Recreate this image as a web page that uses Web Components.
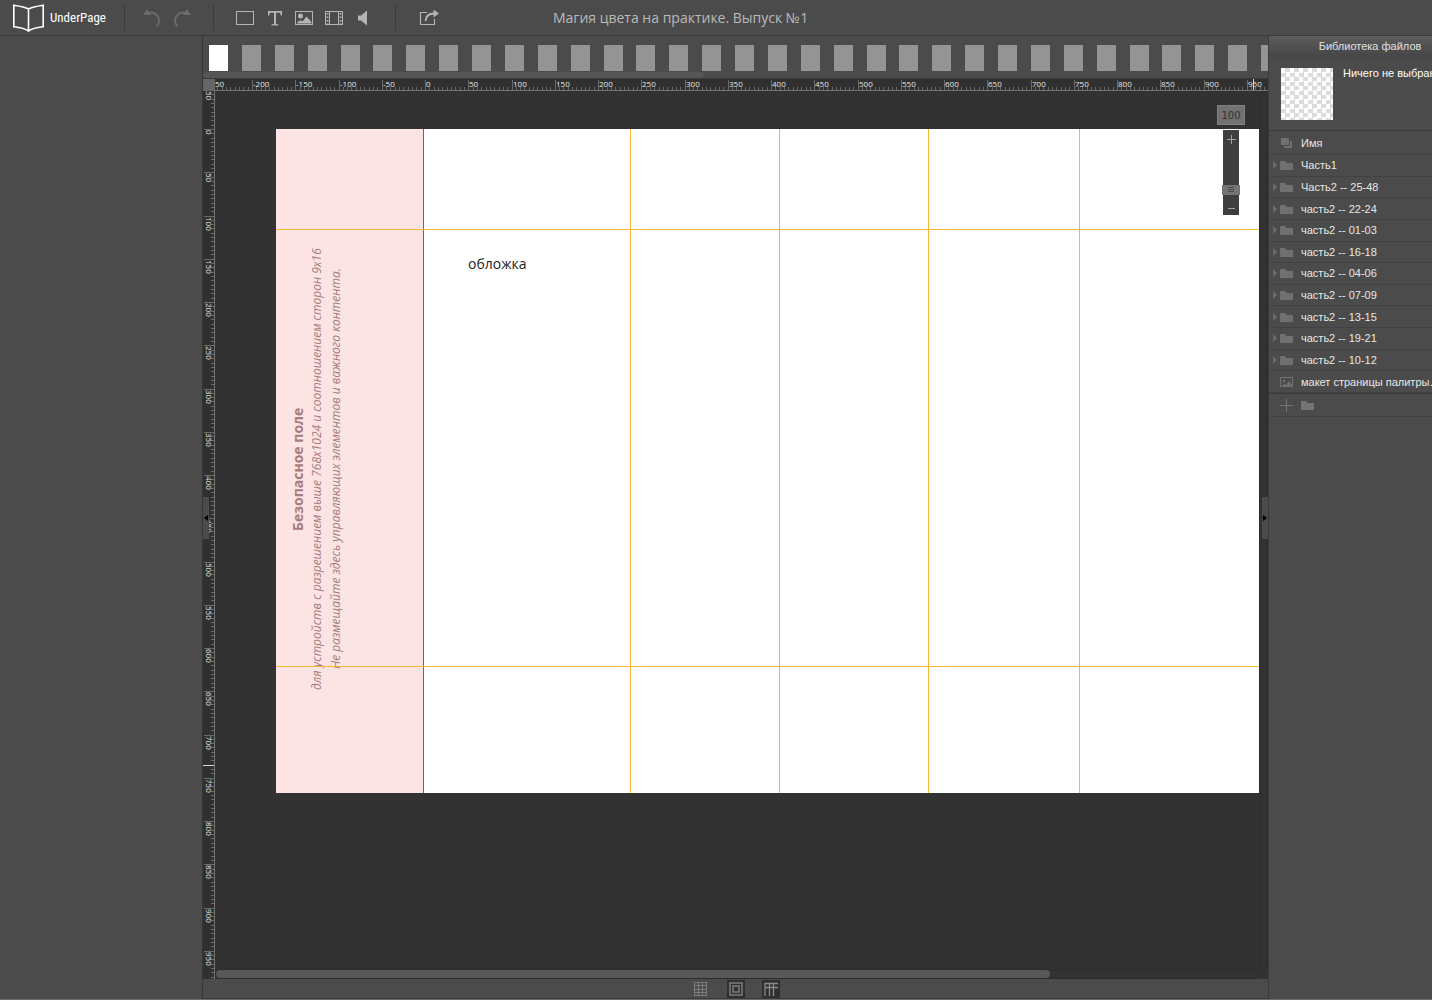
<!DOCTYPE html>
<html lang="ru">
<head>
<meta charset="utf-8">
<title>UnderPage</title>
<style>
  html, body {
    height: 100%;
    margin: 0;
  }

  body {
    background: #4b4b4b;
    color: #d0d0d0;
    font-family: "Open Sans", sans-serif;
    overflow: hidden;
  }
</style>
</head>
<body>
<up-app></up-app>

<script>
const ICONS = {
  undo: '<path d="M5 4c6-2 11 2.500 11 8 0 2.500-1 4-2.500 5.500" fill="none" stroke="currentColor" stroke-width="1.800"/><path d="M0 6 4 0l4 6z" fill="currentColor"/>',
  redo: '<path d="M13 4C7 2 2 6.500 2 12c0 2.500 1 4 2.500 5.500" fill="none" stroke="currentColor" stroke-width="1.800"/><path d="m18 6-4-6-4 6z" fill="currentColor"/>',
  frame: '<rect x=".5" y="2.500" width="17" height="13" fill="none" stroke="currentColor"/>',
  text: '<path d="M2 2h14v4.500h-1.200l-.8-2.700h-4V15l2.500.6v.9h-7v-.9L8 15V3.800H4l-.8 2.700H2z" fill="currentColor"/>',
  image: '<rect x=".5" y="2.500" width="17" height="13" fill="none" stroke="currentColor"/><circle cx="5.500" cy="7" r="2.500" fill="currentColor"/><path d="M2 14.500c1-3 4-4 5.500-2L11.500 7.500l5 5.500v1.500z" fill="currentColor"/>',
  video: '<rect x=".5" y="2.500" width="17" height="13" fill="none" stroke="currentColor"/><path d="M4.500 3v12M13.500 3v12" stroke="currentColor"/><path d="M2.500 4v11M15.500 4v11" stroke="currentColor" stroke-width="2" stroke-dasharray="1.500 2"/>',
  sound: '<path d="M3 6.500h3l6-5v15l-6-5H3z" fill="currentColor"/>',
  share: '<path d="M7 3.500H.5v12h14V10" fill="none" stroke="currentColor" stroke-width="1.200"/><path d="M5.500 12C6 7 9 4.500 14 4.500" fill="none" stroke="currentColor" stroke-width="1.800"/><path d="M13.500.5 19 4.500l-5.500 4z" fill="currentColor"/>',
  grid: '<path d="M2.500 2v14M6.500 2v14M10.500 2v14M14.500 2v14M2 2.500h13M2 5.500h13M2 9.500h13M2 12.500h13M2 15.500h13" stroke="currentColor"/>',
  bounds: '<rect x="3" y="3" width="12" height="12" fill="none" stroke="currentColor" stroke-width="1.300"/><rect x="6" y="6" width="6" height="6" fill="none" stroke="currentColor" stroke-width="1.300"/>',
  guides: '<path d="M3 16V3.500h13M3 7.500h13M7.500 3v13M11.500 3v13" fill="none" stroke="currentColor" stroke-width="1.300"/>',
  folder: '<path d="M3 5h5l1.500 2H16v7H3z" fill="currentColor"/>',
  stack: '<path d="M4 4h8v7H4z" fill="currentColor"/><path d="M13 7h2v7H7v-2h6z" fill="currentColor"/>',
  photo: '<rect x="3.500" y="4.500" width="12" height="9" fill="none" stroke="currentColor"/><circle cx="7" cy="8" r="1.300" fill="currentColor"/><path d="m5 13 2-2 2 1 3-4 3 4v1z" fill="currentColor"/>',
  plus: '<path d="M9.500 3v13M3 9.500h13" stroke="currentColor"/>'
};

const FILES = [
  'Часть1', 'Часть2 -- 25-48', 'часть2 -- 22-24', 'часть2 -- 01-03',
  'часть2 -- 16-18', 'часть2 -- 04-06', 'часть2 -- 07-09',
  'часть2 -- 13-15', 'часть2 -- 19-21', 'часть2 -- 10-12'
];

const PAGE_COUNT = 33;

class UpElement extends HTMLElement {
  constructor() {
    super();
    const template = document.createElement( 'template' );
    template.innerHTML = this.template();
    this.attachShadow( {mode: 'open'} );
    this.shadowRoot.appendChild( template.content.cloneNode( true ) );
  }
}

class UpIcon extends UpElement {
  template() {
    return /* template */ `
      <style>
        :host {
          display: block;
          flex: none;
          height: 18px;
          width: 18px;
        }

        svg {
          display: block;
          overflow: visible;
        }
      </style>
      <svg width="18" height="18" viewBox="0 0 18 18" aria-hidden="true"></svg>
    `;
  }

  connectedCallback() {
    this.shadowRoot.querySelector( 'svg' ).innerHTML = ICONS[this.getAttribute( 'name' )];
  }
}

class UpTool extends UpElement {
  template() {
    return /* template */ `
      <style>
        :host {
          color: #b4b4b4;
          display: block;
          width: 30px;
        }

        :host( [disabled] ) {
          color: #6c6c6c;
        }

        :host( [small] ) {
          color: #7c7c7c;
          width: 18px;
        }

        :host( [active] ) {
          background: #303030;
          color: #8a8a8a;
        }

        button {
          align-items: center;
          background: none;
          border: none;
          color: inherit;
          display: flex;
          justify-content: center;
          padding: 0;
          width: 100%;
        }
      </style>
      <button type="button"><up-icon></up-icon></button>
    `;
  }

  connectedCallback() {
    const button = this.shadowRoot.querySelector( 'button' );
    button.setAttribute( 'aria-label', this.getAttribute( 'label' ) );
    button.disabled = this.hasAttribute( 'disabled' );
    const icon = document.createElement( 'up-icon' );
    icon.setAttribute( 'name', this.getAttribute( 'icon' ) );
    button.replaceChildren( icon );
  }
}

class UpToolbar extends UpElement {
  template() {
    return /* template */ `
      <style>
        :host {
          align-items: center;
          background: #4b4b4b;
          border-bottom: solid 1px #3a3a3a;
          box-sizing: border-box;
          display: flex;
          flex: none;
          height: 36px;
        }

        a {
          align-items: center;
          box-sizing: border-box;
          color: #ffffff;
          display: flex;
          font-family: "Roboto Condensed", "Liberation Sans Narrow", "Open Sans", sans-serif;
          font-size: 13px;
          gap: 6px;
          padding-left: 13px;
          text-decoration: none;
          width: 124px;
        }

        nav {
          align-items: center;
          border-left: solid 1px #3a3a3a;
          box-sizing: border-box;
          display: flex;
          height: 26px;
          padding: 0 18px;
        }

        .history {
          padding: 0 12px;
          width: 89px;
        }

        .insert {
          padding: 0 16px;
          width: 182px;
        }

        h1 {
          color: #bababa;
          font-size: 14px;
          font-weight: 400;
          line-height: 18px;
          margin: 0 0 0 91px;
          white-space: nowrap;
        }
      </style>
      <a href="#">
        <svg width="31" height="28" viewBox="0 0 31 28" fill="none" stroke="#ffffff" stroke-width="1.600" aria-hidden="true">
          <path d="M15.500 5C12 3 6 2 .8 1.200v21.600c5.200.6 11.200 1.600 14.700 4.200 3.500-2.600 9.500-3.600 14.700-4.200V1.200C25 2 19 3 15.500 5zv22"/>
        </svg>
        <span>UnderPage</span>
      </a>
      <nav class="history">
        <up-tool icon="undo" label="Отменить" disabled></up-tool>
        <up-tool icon="redo" label="Повторить" disabled></up-tool>
      </nav>
      <nav class="insert">
        <up-tool icon="frame" label="Блок"></up-tool>
        <up-tool icon="text" label="Текст"></up-tool>
        <up-tool icon="image" label="Изображение"></up-tool>
        <up-tool icon="video" label="Видео"></up-tool>
        <up-tool icon="sound" label="Звук"></up-tool>
      </nav>
      <nav>
        <up-tool icon="share" label="Экспорт"></up-tool>
      </nav>
      <h1><slot></slot></h1>
    `;
  }
}

class UpPages extends UpElement {
  template() {
    return /* template */ `
      <style>
        :host {
          background: #4b4b4b;
          border-bottom: solid 1px #3a3a3a;
          box-sizing: border-box;
          display: flex;
          flex: none;
          flex-direction: column;
          height: 43px;
          justify-content: space-between;
          overflow: hidden;
          padding-top: 9px;
        }

        div {
          display: grid;
          grid-auto-columns: 1fr;
          grid-auto-flow: column;
          margin: 0 -26px 0 6px;
        }

        button {
          background: #949494;
          border: none;
          height: 26px;
          padding: 0;
          width: 19px;
        }

        button[aria-current] {
          background: #ffffff;
        }

        span {
          background: #565656;
          border-radius: 3px;
          height: 6px;
          width: 47%;
        }
      </style>
      <div></div>
      <span></span>
    `;
  }

  connectedCallback() {
    const list = this.shadowRoot.querySelector( 'div' );
    for( let p = 0; p < PAGE_COUNT; p++ ) {
      const button = document.createElement( 'button' );
      button.type = 'button';
      button.setAttribute( 'aria-label', `Страница ${p + 1}` );
      if( p === 0 ) {
        button.setAttribute( 'aria-current', 'page' );
      }
      list.appendChild( button );
    }
  }
}

// Ticks every 5 units, labels every 50
class UpRuler extends UpElement {
  template() {
    return /* template */ `
      <style>
        :host {
          background: #303030;
          border-bottom: solid 1px #747474;
          box-sizing: border-box;
          display: block;
          height: 12px;
          min-width: 0;
          overflow: hidden;
        }

        :host( [vertical] ) {
          border-bottom: none;
          border-right: solid 1px #747474;
          height: auto;
          min-height: 0;
          width: 12px;
        }

        svg {
          display: block;
          height: 100%;
          width: 100%;
        }

        path {
          stroke: #6a6a6a;
        }

        .cursor {
          stroke: #d8d8d8;
        }

        text {
          fill: #e4e4e4;
          font-size: 8px;
        }
      </style>
      <svg></svg>
    `;
  }

  connectedCallback() {
    this._observer = new ResizeObserver( () => this._render() );
    this._observer.observe( this );
  }

  disconnectedCallback() {
    this._observer.disconnect();
  }

  _render() {
    const vertical = this.hasAttribute( 'vertical' );
    const origin = Number( this.getAttribute( 'origin' ) );
    const scale = Number( this.getAttribute( 'scale' ) );
    const cursor = Number( this.getAttribute( 'cursor' ) );
    const length = vertical ? this.clientHeight : this.clientWidth;
    const line = ( at, from ) => vertical ? `M${from} ${at + 0.5}H11` : `M${at + 0.5} ${from}V11`;

    let ticks = '';
    let labels = '';
    const first = Math.floor( -origin / scale / 50 ) * 50;
    for( let unit = first; unit * scale + origin < length; unit += 5 ) {
      const at = Math.round( unit * scale + origin );
      if( unit % 50 === 0 ) {
        // A label that starts before the edge keeps its last digits
        const label = at < 0 ? String( unit ).slice( -2 ) : unit;
        const start = Math.max( at + 1, 0 );
        ticks += line( at, 1 );
        labels += vertical
          ? `<text transform="translate(3 ${start}) rotate(90)">${label}</text>`
          : `<text x="${start}" y="8">${label}</text>`;
      } else {
        ticks += line( at, 8 );
      }
    }

    this.shadowRoot.querySelector( 'svg' ).innerHTML =
      `<path d="${ticks}"/>${labels}<path class="cursor" d="${line( cursor, 0 )}"/>`;
  }
}

class UpZoom extends UpElement {
  template() {
    return /* template */ `
      <style>
        :host {
          align-items: center;
          display: flex;
          flex-direction: column;
          gap: 5px;
          width: 28px;
        }

        .value {
          background: #727272;
          border: solid 1px #808080;
          box-sizing: border-box;
          color: #303030;
          font-family: "DejaVu Sans", sans-serif;
          font-size: 10px;
          height: 20px;
          padding: 0;
          text-align: center;
          width: 28px;
        }

        div {
          align-items: center;
          background: #3e3e3e;
          display: flex;
          flex-direction: column;
          height: 85px;
          width: 16px;
        }

        button {
          background: none;
          border: none;
          color: #a0a0a0;
          flex: none;
          height: 18px;
          padding: 0;
          width: 16px;
        }

        button svg {
          display: block;
          margin: 0 auto;
        }

        .range {
          -webkit-appearance: none;
          appearance: none;
          background: none;
          direction: rtl;
          flex: 1;
          margin: 0 -1px;
          min-height: 0;
          width: 18px;
          writing-mode: vertical-lr;
        }

        .range::-webkit-slider-thumb {
          -webkit-appearance: none;
          background:
            linear-gradient( #4a4a4a 1px, transparent 1px 2px, #4a4a4a 2px 3px, transparent 3px 4px, #4a4a4a 4px 5px, transparent 5px ) center 2px / 6px 6px no-repeat,
            #747474;
          border: none;
          height: 10px;
          width: 18px;
        }
      </style>
      <input class="value" type="text" value="100" aria-label="Масштаб">
      <div>
        <button type="button" aria-label="Увеличить">
          <svg width="9" height="9" viewBox="0 0 9 9" stroke="currentColor"><path d="M4.500 0v9M0 4.500h9"/></svg>
        </button>
        <input class="range" type="range" min="0" max="100" value="5" aria-label="Масштаб">
        <button type="button" aria-label="Уменьшить">
          <svg width="9" height="9" viewBox="0 0 9 9" stroke="currentColor"><path d="M1 6.500h7"/></svg>
        </button>
      </div>
    `;
  }
}

class UpCanvas extends UpElement {
  template() {
    return /* template */ `
      <style>
        :host {
          background: #323232;
          display: grid;
          grid-template-columns: 1fr 9px;
          grid-template-rows: 1fr 10px;
          min-height: 0;
          min-width: 0;
        }

        .view {
          overflow: hidden;
          position: relative;
        }

        .page {
          background: #ffffff;
          display: flex;
          height: 664px;
          left: 61px;
          position: absolute;
          right: 0;
          top: 38px;
        }

        /* Turned upside down so the vertical text reads upwards */
        .safe {
          background: #fce4e4;
          border-left: solid 1px #d8383c;
          box-sizing: border-box;
          color: #a87c7c;
          font-size: 12px;
          font-style: italic;
          line-height: 19px;
          padding: 0 12px 16px 0;
          text-align: center;
          transform: rotate( 180deg );
          white-space: nowrap;
          width: 148px;
          writing-mode: vertical-rl;
        }

        strong {
          display: block;
          font-size: 14px;
          font-style: normal;
        }

        .text {
          color: #222222;
          font-size: 14px;
          left: 192px;
          line-height: 20px;
          position: absolute;
          top: 125px;
        }

        i {
          background: #f9b931;
          position: absolute;
        }

        .v {
          bottom: 0;
          top: 0;
          width: 1px;
        }

        .h {
          height: 1px;
          left: 0;
          right: 0;
        }

        up-zoom {
          position: absolute;
          right: 14px;
          top: 14px;
        }

        .track {
          border: solid 1px #2c2c2c;
          border-radius: 5px;
          box-sizing: border-box;
        }

        .thumb {
          background: #585858;
          border-radius: 4px;
          height: 8px;
          width: 80%;
        }
      </style>
      <div class="view">
        <div class="page">
          <div class="safe">
            <strong>Безопасное поле</strong>
            для устройств с разрешением выше 768x1024 и соотношением сторон 9x16<br>
            Не размещайте здесь управляющих элементов и важного контента.
          </div>
          <div class="text"><slot></slot></div>
          <i class="v" style="left: 354px"></i>
          <i class="v" style="left: 503px"></i>
          <i class="v" style="left: 652px"></i>
          <i class="v" style="left: 803px"></i>
          <i class="h" style="top: 100px"></i>
          <i class="h" style="top: 537px"></i>
        </div>
        <up-zoom></up-zoom>
      </div>
      <div class="track"></div>
      <div class="track"><div class="thumb"></div></div>
    `;
  }
}

class UpFileRow extends UpElement {
  template() {
    return /* template */ `
      <style>
        :host {
          align-items: center;
          border-bottom: solid 1px #424242;
          box-sizing: border-box;
          display: flex;
          min-height: 0;
        }

        button {
          align-items: center;
          background: none;
          border: none;
          color: #e8e8e8;
          display: flex;
          font: inherit;
          padding: 0 0 0 4px;
          white-space: nowrap;
        }

        .arrow {
          border: solid 4px transparent;
          border-left: solid 4px #6a6a6a;
          border-right: none;
        }

        :host( [icon] ) .arrow {
          border-left-color: transparent;
        }

        up-icon {
          color: #707070;
          margin: 0 6px 0 0;
        }
      </style>
      <button type="button">
        <span class="arrow"></span>
        <up-icon name="folder"></up-icon>
        <slot></slot>
      </button>
    `;
  }

  connectedCallback() {
    if( this.hasAttribute( 'icon' ) ) {
      const icon = document.createElement( 'up-icon' );
      icon.setAttribute( 'name', this.getAttribute( 'icon' ) );
      this.shadowRoot.querySelector( 'up-icon' ).replaceWith( icon );
    }
  }
}

class UpFiles extends UpElement {
  template() {
    return /* template */ `
      <style>
        :host {
          border-left: solid 1px #3a3a3a;
          box-sizing: border-box;
          display: block;
          flex: none;
          font-family: "Liberation Sans", sans-serif;
          font-size: 11px;
          overflow: hidden;
          width: 164px;
        }

        .panel {
          display: flex;
          flex-direction: column;
          width: 202px;
        }

        h2 {
          background: linear-gradient( #5c5c5c, #464646 );
          color: #e0e0e0;
          font-size: 11px;
          font-weight: 400;
          line-height: 21px;
          margin: 0;
          text-align: center;
        }

        .preview {
          border-bottom: solid 1px #3a3a3a;
          color: #ffffff;
          display: flex;
          gap: 10px;
          padding: 11px 0 10px 12px;
        }

        .checker {
          background: repeating-conic-gradient( #dcdcdc 0 25%, #ffffff 0 50% ) 0 0 / 9px 9px;
          height: 52px;
          width: 52px;
        }

        .preview p {
          line-height: 10px;
          margin: 0;
          white-space: nowrap;
        }

        .head {
          height: 24px;
        }

        .list {
          border-bottom: solid 1px #3a3a3a;
          display: grid;
          grid-auto-rows: 1fr;
          height: 238px;
        }

        .tools {
          align-items: center;
          border-bottom: solid 1px #424242;
          display: flex;
          gap: 3px;
          height: 22px;
          padding-left: 8px;
        }

        .tools up-tool {
          color: #747474;
        }
      </style>
      <div class="panel">
        <h2>Библиотека файлов</h2>
        <div class="preview">
          <div class="checker"></div>
          <p>Ничего не выбрано</p>
        </div>
        <up-file-row class="head" icon="stack">Имя</up-file-row>
        <div class="list">
          ${FILES.map( ( name ) => `<up-file-row>${name}</up-file-row>` ).join( '' )}
          <up-file-row icon="photo">макет страницы палитры…</up-file-row>
        </div>
        <div class="tools">
          <up-tool icon="plus" label="Добавить файл" small></up-tool>
          <up-tool icon="folder" label="Новая папка" small></up-tool>
        </div>
      </div>
    `;
  }
}

class UpStatus extends UpElement {
  template() {
    return /* template */ `
      <style>
        :host {
          align-items: center;
          background: #4b4b4b;
          border-bottom: solid 1px #3a3a3a;
          box-sizing: border-box;
          display: flex;
          flex: none;
          gap: 17px;
          height: 20px;
          justify-content: center;
        }
      </style>
      <up-tool icon="grid" label="Сетка" small></up-tool>
      <up-tool icon="bounds" label="Границы" small active></up-tool>
      <up-tool icon="guides" label="Направляющие" small active></up-tool>
    `;
  }
}

class UpApp extends UpElement {
  template() {
    return /* template */ `
      <style>
        :host {
          border-bottom: solid 1px #6a6a6a;
          box-sizing: border-box;
          display: flex;
          flex-direction: column;
          height: 100vh;
        }

        .body {
          display: flex;
          flex: 1;
          min-height: 0;
        }

        aside {
          border-right: solid 1px #363636;
          flex: none;
          width: 202px;
        }

        main {
          display: flex;
          flex: 1;
          flex-direction: column;
          min-width: 0;
          position: relative;
        }

        .work {
          display: grid;
          flex: 1;
          grid-template-columns: 12px 1fr;
          grid-template-rows: 12px 1fr;
          min-height: 0;
        }

        .corner {
          background: #666666;
        }

        .fold {
          align-items: center;
          background: #4b4b4b;
          border: none;
          display: flex;
          height: 42px;
          justify-content: center;
          left: 0;
          padding: 0;
          position: absolute;
          top: 461px;
          width: 6px;
        }

        .fold.end {
          left: auto;
          right: 0;
        }
      </style>
      <up-toolbar>Магия цвета на практике. Выпуск №1</up-toolbar>
      <div class="body">
        <aside></aside>
        <main>
          <up-pages></up-pages>
          <div class="work">
            <div class="corner"></div>
            <up-ruler origin="210" scale="0.865" cursor="1038"></up-ruler>
            <up-ruler vertical origin="38" scale="0.865" cursor="674"></up-ruler>
            <up-canvas>обложка</up-canvas>
          </div>
          <up-status></up-status>
          <button class="fold" type="button" aria-label="Свернуть левую панель">
            <svg width="4" height="6" viewBox="0 0 4 6"><path d="M4 0v6L0 3z"/></svg>
          </button>
          <button class="fold end" type="button" aria-label="Свернуть правую панель">
            <svg width="4" height="6" viewBox="0 0 4 6"><path d="M0 0v6l4-3z"/></svg>
          </button>
        </main>
        <up-files></up-files>
      </div>
    `;
  }
}

window.customElements.define( 'up-icon', UpIcon );
window.customElements.define( 'up-tool', UpTool );
window.customElements.define( 'up-toolbar', UpToolbar );
window.customElements.define( 'up-pages', UpPages );
window.customElements.define( 'up-ruler', UpRuler );
window.customElements.define( 'up-zoom', UpZoom );
window.customElements.define( 'up-canvas', UpCanvas );
window.customElements.define( 'up-file-row', UpFileRow );
window.customElements.define( 'up-files', UpFiles );
window.customElements.define( 'up-status', UpStatus );
window.customElements.define( 'up-app', UpApp );
</script>
</body>
</html>
